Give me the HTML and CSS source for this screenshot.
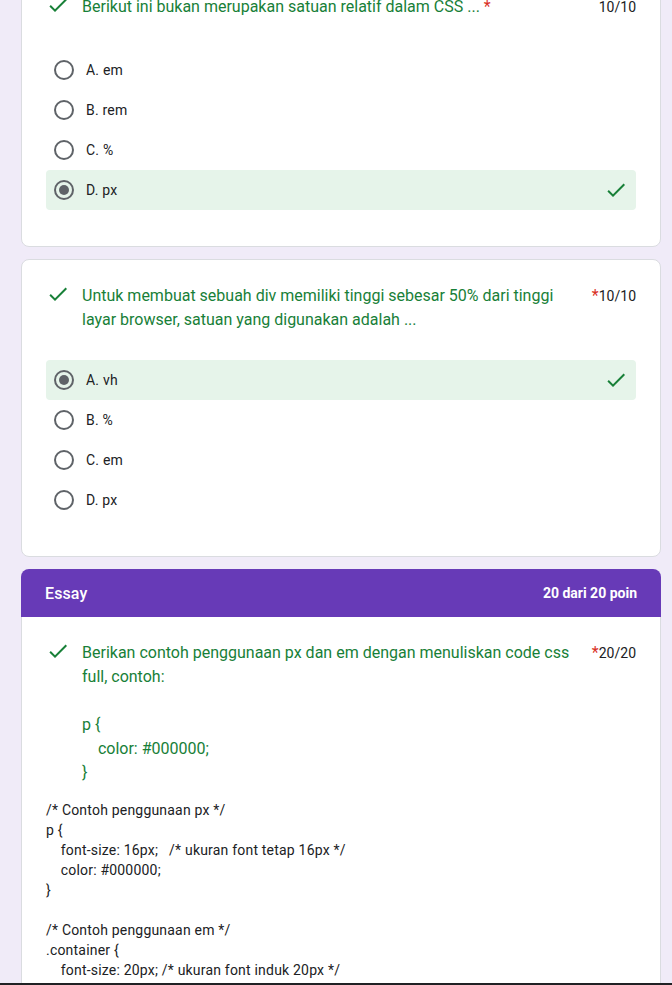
FILE: index.html
```html
<!DOCTYPE html>
<html lang="id">
<head>
<meta charset="utf-8">
<title>Kuis CSS</title>
<link rel="stylesheet" href="styles.css">
</head>
<body>
<main class="page">
  <section class="card card-first">
    <div class="qhead">
      <svg class="qcheck" viewBox="0 0 24 24"><path d="M9 16.17L4.83 12l-1.42 1.41L9 19 21 7l-1.41-1.41z"/></svg>
      <div class="qtext">Berikut ini bukan merupakan satuan relatif dalam CSS ...</div>
      <span class="req">*</span>
      <span class="score">10/10</span>
    </div>
    <div class="options">
      <div class="opt"><span class="radio"></span><span class="olabel">A. em</span></div>
      <div class="opt"><span class="radio"></span><span class="olabel">B. rem</span></div>
      <div class="opt"><span class="radio"></span><span class="olabel">C. %</span></div>
      <div class="opt opt-correct"><span class="radio radio-on"></span><span class="olabel">D. px</span>
        <svg class="ocheck" viewBox="0 0 24 24"><path d="M9 16.17L4.83 12l-1.42 1.41L9 19 21 7l-1.41-1.41z"/></svg></div>
    </div>
  </section>

  <section class="card">
    <div class="qhead">
      <svg class="qcheck" viewBox="0 0 24 24"><path d="M9 16.17L4.83 12l-1.42 1.41L9 19 21 7l-1.41-1.41z"/></svg>
      <div class="qtext">Untuk membuat sebuah div memiliki tinggi sebesar 50% dari tinggi layar browser, satuan yang digunakan adalah ...</div>
      <span class="req">*</span>
      <span class="score">10/10</span>
    </div>
    <div class="options">
      <div class="opt opt-correct"><span class="radio radio-on"></span><span class="olabel">A. vh</span>
        <svg class="ocheck" viewBox="0 0 24 24"><path d="M9 16.17L4.83 12l-1.42 1.41L9 19 21 7l-1.41-1.41z"/></svg></div>
      <div class="opt"><span class="radio"></span><span class="olabel">B. %</span></div>
      <div class="opt"><span class="radio"></span><span class="olabel">C. em</span></div>
      <div class="opt"><span class="radio"></span><span class="olabel">D. px</span></div>
    </div>
  </section>

  <section class="section">
    <header class="section-head">
      <span class="section-title">Essay</span>
      <span class="section-score">20 dari 20 poin</span>
    </header>
    <div class="section-body">
      <div class="qhead">
        <svg class="qcheck" viewBox="0 0 24 24"><path d="M9 16.17L4.83 12l-1.42 1.41L9 19 21 7l-1.41-1.41z"/></svg>
        <div class="qtext qpre">Berikan contoh penggunaan px dan em dengan menuliskan code css full, contoh:

p {
    color: #000000;
}</div>
        <span class="req">*</span>
        <span class="score">20/20</span>
      </div>
      <div class="answer">/* Contoh penggunaan px */
p {
    font-size: 16px;   /* ukuran font tetap 16px */
    color: #000000;
}

/* Contoh penggunaan em */
.container {
    font-size: 20px; /* ukuran font induk 20px */
}

.container p {
    font-size: 1.5em; /* 1.5 x 20px = 30px */
}</div>
    </div>
  </section>
</main>
<div class="viewport-edge"></div>
</body>
</html>
```

FILE: styles.css
```css
* { box-sizing: border-box; }

html, body {
  margin: 0;
  padding: 0;
  background: #f0ebf8;
}

body {
  font-family: Roboto, "Noto Sans", Arial, sans-serif;
  color: #202124;
}

.page {
  width: 640px;
  margin-left: 21px;
  display: flex;
  flex-direction: column;
  gap: 12px;
  padding-bottom: 40px;
}

.card {
  background: #fff;
  border: 1px solid #dadce0;
  border-radius: 8px;
  padding: 24px 24px 24px;
}

.card-first {
  margin-top: -30px;
}

.card-first .options {
  margin-top: 31px;
}

.qhead {
  display: flex;
  align-items: flex-start;
}

.qcheck {
  flex: none;
  width: 24px;
  height: 24px;
  fill: #188038;
  margin-right: 12px;
  margin-top: -2px;
}

.qtext {
  flex: 0 1 auto;
  font-size: 16px;
  line-height: 24px;
  letter-spacing: 0;
  color: #188038;
  padding-right: 2px;
}

.qpre {
  white-space: pre-wrap;
}

.req {
  flex: none;
  color: #d93025;
  font-size: 16px;
  line-height: 24px;
  margin-left: 2px;
}

.score {
  flex: none;
  margin-left: auto;
  padding-left: 0;
  font-size: 14px;
  line-height: 24px;
  color: #202124;
}

.options {
  margin-top: 28px;
  padding-bottom: 12px;
  display: flex;
  flex-direction: column;
}

.opt {
  display: flex;
  align-items: center;
  height: 40px;
  padding: 0 8px;
  border-radius: 4px;
}

.opt-correct {
  background: #e6f4ea;
}

.radio {
  flex: none;
  width: 20px;
  height: 20px;
  border: 2px solid #5f6368;
  border-radius: 50%;
  display: flex;
  align-items: center;
  justify-content: center;
}

.radio-on::after {
  content: "";
  width: 10px;
  height: 10px;
  border-radius: 50%;
  background: #5f6368;
}

.olabel {
  margin-left: 12px;
  font-size: 14px;
  letter-spacing: 0.2px;
  color: #202124;
}

.ocheck {
  margin-left: auto;
  width: 24px;
  height: 24px;
  fill: #188038;
}

.section {
  display: flex;
  flex-direction: column;
}

.section-head {
  height: 48px;
  background: #673ab7;
  color: #fff;
  border-radius: 8px 8px 0 0;
  padding: 0 24px;
  display: flex;
  align-items: center;
  justify-content: space-between;
}

.section-title {
  font-size: 16px;
  font-weight: 500;
  letter-spacing: 0.1px;
}

.section-score {
  font-size: 14px;
  font-weight: 700;
}

.section-body {
  background: #fff;
  border: 1px solid #dadce0;
  border-top: none;
  border-radius: 0 0 8px 8px;
  padding: 24px 24px 24px;
}

.answer {
  margin-top: 15px;
  white-space: pre-wrap;
  font-size: 14px;
  line-height: 20px;
  color: #202124;
  letter-spacing: 0.2px;
}

.viewport-edge {
  position: fixed;
  left: 0;
  right: 0;
  bottom: 0;
  height: 2px;
  background: #202124;
}
```
